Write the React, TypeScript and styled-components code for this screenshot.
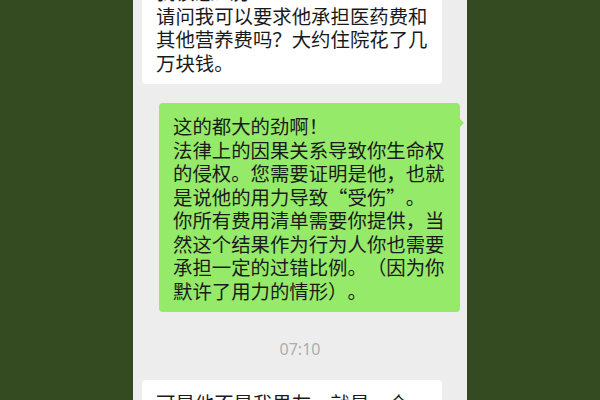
import {FunctionComponent} from "react";
import styled, {createGlobalStyle} from "styled-components";

const GlobalStyle = createGlobalStyle`
  html, body {
    margin: 0;
    padding: 0;
    background: #344b22;
  }
  body {
    font-family: "Noto Sans CJK SC", "Noto Sans", sans-serif;
  }
`;

const messages = {
  first: "我该怎么办\n请问我可以要求他承担医药费和\n其他营养费吗？大约住院花了几\n万块钱。",
  reply:
    "这的都大的劲啊！\n法律上的因果关系导致你生命权\n的侵权。您需要证明是他，也就\n是说他的用力导致“受伤”。\n你所有费用清单需要你提供，当\n然这个结果作为行为人你也需要\n承担一定的过错比例。（因为你\n默许了用力的情形）。",
  next: "可是他不是我男友，就是一个\n朋友",
};

const App: FunctionComponent = () => {
  return (
    <>
      <GlobalStyle />
      <Screen>
        <Chat>
          <Bubble side="left" offsetTop={-31}>{messages.first}</Bubble>
          <Bubble side="right">{messages.reply}</Bubble>
          <Time>07:10</Time>
          <Bubble side="left">{messages.next}</Bubble>
        </Chat>
      </Screen>
    </>
  );
};

const Screen = styled.div`
  width: 334px;
  height: 400px;
  margin: 0 auto;
  background: #ededed;
  overflow: hidden;
`;

const Chat = styled.div`
  display: flex;
  flex-direction: column;
`;

const Bubble = styled.div<{side: "left" | "right"; offsetTop?: number}>`
  position: relative;
  box-sizing: border-box;
  width: ${({side}) => (side === "left" ? "300px" : "301px")};
  margin-top: ${({offsetTop}) => (offsetTop !== undefined ? `${offsetTop}px` : "0")};
  margin-bottom: ${({offsetTop}) => (offsetTop !== undefined ? "19px" : "18px")};
  align-self: ${({side}) => (side === "left" ? "flex-start" : "flex-end")};
  margin-left: ${({side}) => (side === "left" ? "9px" : "0")};
  margin-right: ${({side}) => (side === "right" ? "7px" : "0")};
  padding: 11px 14px 10px 14px;
  border-radius: 4px;
  background: ${({side}) => (side === "left" ? "#ffffff" : "#95ea6a")};
  color: #1a1a1a;
  font-size: 19.4px;
  line-height: 23.5px;
  white-space: pre-line;
  text-spacing-trim: space-all;
  ${({side}) =>
    side === "right" &&
    `
    &::after {
      content: "";
      position: absolute;
      right: -4px;
      top: 15px;
      border-top: 5px solid transparent;
      border-bottom: 5px solid transparent;
      border-left: 5px solid #95ea6a;
    }
  `}
`;

const Time = styled.div`
  margin: 8px 0 20px;
  text-align: center;
  font-family: "Noto Sans", "Liberation Sans", sans-serif;
  font-size: 16px;
  line-height: 22px;
  color: #adadad;
`;

export default App;
